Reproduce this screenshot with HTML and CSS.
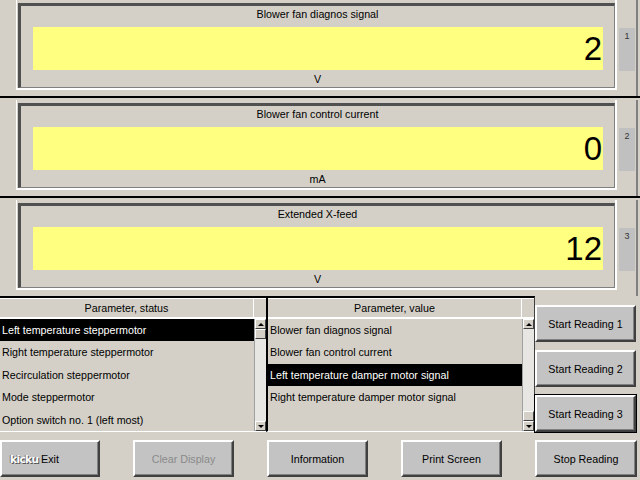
FILE: index.html
```html
<!DOCTYPE html>
<html>
<head>
<meta charset="utf-8">
<link rel="stylesheet" href="styles.css">
</head>
<body>
<div class="screen">
  <section class="meters">
    <div class="meter-row">
      <div class="frame">
        <div class="frame-inner">
          <div class="m-title">Blower fan diagnos signal</div>
          <div class="display">2</div>
          <div class="m-unit">V</div>
        </div>
      </div>
      <div class="tab-col"><div class="tab">1</div></div>
    </div>
    <div class="meter-row">
      <div class="frame">
        <div class="frame-inner">
          <div class="m-title">Blower fan control current</div>
          <div class="display">0</div>
          <div class="m-unit">mA</div>
        </div>
      </div>
      <div class="tab-col"><div class="tab">2</div></div>
    </div>
    <div class="meter-row last">
      <div class="frame">
        <div class="frame-inner">
          <div class="m-title">Extended X-feed</div>
          <div class="display">12</div>
          <div class="m-unit">V</div>
        </div>
      </div>
      <div class="tab-col"><div class="tab">3</div></div>
    </div>
  </section>

  <section class="lower">
    <div class="list list-left">
      <div class="l-head">Parameter, status</div>
      <div class="l-head-gap"></div>
      <div class="l-rows">
        <div class="l-row sel">Left temperature steppermotor</div>
        <div class="l-row">Right temperature steppermotor</div>
        <div class="l-row">Recirculation steppermotor</div>
        <div class="l-row">Mode steppermotor</div>
        <div class="l-row">Option switch no. 1 (left most)</div>
      </div>
      <div class="sbar">
        <div class="sb-btn"><span class="tri-up"></span></div>
        <div class="sb-thumb"></div>
        <div class="sb-track"></div>
        <div class="sb-btn"><span class="tri-down"></span></div>
      </div>
    </div>
    <div class="list list-right">
      <div class="l-head">Parameter, value</div>
      <div class="l-head-gap"></div>
      <div class="l-rows">
        <div class="l-row">Blower fan diagnos signal</div>
        <div class="l-row">Blower fan control current</div>
        <div class="l-row sel">Left temperature damper motor signal</div>
        <div class="l-row">Right temperature damper motor signal</div>
      </div>
      <div class="sbar">
        <div class="sb-btn"><span class="tri-up"></span></div>
        <div class="sb-track"></div>
        <div class="sb-thumb"></div>
        <div class="sb-btn"><span class="tri-down"></span></div>
      </div>
    </div>
    <div class="read-col">
      <div class="btn">Start Reading 1</div>
      <div class="btn">Start Reading 2</div>
      <div class="btn default">Start Reading 3</div>
    </div>
  </section>

  <footer class="actions">
    <div class="btn exit">Exit</div>
    <div class="btn disabled">Clear Display</div>
    <div class="btn">Information</div>
    <div class="btn">Print Screen</div>
    <div class="btn stop">Stop Reading</div>
  </footer>
  <div class="watermark">kicku</div>
</div>
</body>
</html>
```

FILE: styles.css
```css
html, body {
  margin: 0;
  padding: 0;
}
body {
  background: #d4d0c8;
  font-family: "Liberation Sans", Arial, sans-serif;
  font-size: 10.7px;
  color: #000;
}
.screen {
  position: relative;
  width: 640px;
  height: 480px;
  overflow: hidden;
}

/* meters */
.meter-row {
  display: flex;
  height: 98px;
  box-sizing: border-box;
  border-bottom: 2px solid #000;
  margin-bottom: 2px;
}
.meter-row.last {
  height: 96px;
  border-bottom: none;
  margin-bottom: 0;
}
.frame {
  margin-left: 16px;
  width: 601px;
  height: 90px;
  box-sizing: border-box;
  border-left: 1px solid #fff;
  border-right: 2px solid #fff;
  border-bottom: 2px solid #fff;
  padding: 3px 0 0 1px;
}
.frame-inner {
  height: 85px;
  box-sizing: border-box;
  border-style: solid;
  border-width: 3px 1px 1px 3px;
  border-color: #505050 #808080 #808080 #505050;
  display: flex;
  flex-direction: column;
}
.m-title {
  height: 16px;
  line-height: 16px;
  text-align: center;
}
.display {
  margin: 5px 11px 0 12px;
  height: 43px;
  background: #ffff80;
  font-size: 33px;
  line-height: 43px;
  text-align: right;
  padding-right: 1px;
}
.m-unit {
  margin-top: 2px;
  height: 14px;
  line-height: 14px;
  text-align: center;
}
.tab-col {
  width: 19px;
  border-right: 2px solid #808080;
}
.tab {
  margin: 28px 0 0 2px;
  width: 16px;
  height: 43px;
  background: #c0c0c0;
  font-size: 9px;
  line-height: 12px;
  padding-top: 2px;
  box-sizing: border-box;
  text-align: center;
  color: #333;
}

/* lower */
.lower {
  display: flex;
  height: 136px;
}
.list {
  display: grid;
  grid-template-columns: 1fr 12px;
  grid-template-rows: 21px 1fr;
  box-sizing: border-box;
  border-top: 2px solid #000;
  border-bottom: 1px solid #fff;
}
.list-left {
  width: 266px;
}
.list-right {
  width: 269px;
  border-left: 2px solid #000;
  border-right: 1px solid #404040;
}
.l-head {
  border-top: 1px solid #fff;
  border-bottom: 2px solid #fff;
  border-right: 1px solid #fff;
  text-align: center;
  line-height: 18px;
}
.l-head-gap {
  border-top: 1px solid #fff;
  border-bottom: 2px solid #fff;
}
.l-rows {
  display: flex;
  flex-direction: column;
  overflow: hidden;
}
.l-row {
  height: 22.4px;
  line-height: 22px;
  padding-left: 2px;
  white-space: nowrap;
}
.l-row.sel {
  background: #000;
  color: #fff;
}
.sbar {
  display: flex;
  flex-direction: column;
  border-left: 1px solid #a0a0a0;
}
.sb-btn, .sb-thumb {
  height: 10px;
  box-sizing: border-box;
  background: #d4d0c8;
  border-style: solid;
  border-width: 1px;
  border-color: #fff #404040 #404040 #fff;
  display: flex;
  align-items: center;
  justify-content: center;
}
.sb-track {
  flex: 1;
  background: #e8e6e2;
}
.tri-up {
  width: 0;
  height: 0;
  border-left: 3px solid transparent;
  border-right: 3px solid transparent;
  border-bottom: 3px solid #000;
}
.tri-down {
  width: 0;
  height: 0;
  border-left: 3px solid transparent;
  border-right: 3px solid transparent;
  border-top: 3px solid #000;
}
.read-col {
  display: flex;
  flex-direction: column;
  gap: 8px;
  padding: 9px 0 0 0;
}

/* buttons */
.btn {
  width: 101px;
  height: 37px;
  box-sizing: border-box;
  background: #c3c3c3;
  border-style: solid;
  border-width: 2px;
  border-color: #fff #404040 #404040 #fff;
  box-shadow: inset -1px -1px 0 #808080;
  display: flex;
  align-items: center;
  justify-content: center;
  white-space: nowrap;
}
.btn.default {
  outline: 1px solid #000;
}
.btn.disabled {
  color: #8a8a8a;
}
.actions {
  display: flex;
  gap: 33px;
  margin-top: 8px;
}
.actions .btn.exit {
  width: 100px;
}
.actions .btn.stop {
  width: 102px;
}

.watermark {
  position: absolute;
  left: 10px;
  top: 453px;
  font-family: "DejaVu Sans", sans-serif;
  font-weight: bold;
  font-size: 10.5px;
  color: #fff;
  text-shadow: 1px 1px 0 #555, -1px 0 0 #777;
  letter-spacing: -0.6px;
}
```
